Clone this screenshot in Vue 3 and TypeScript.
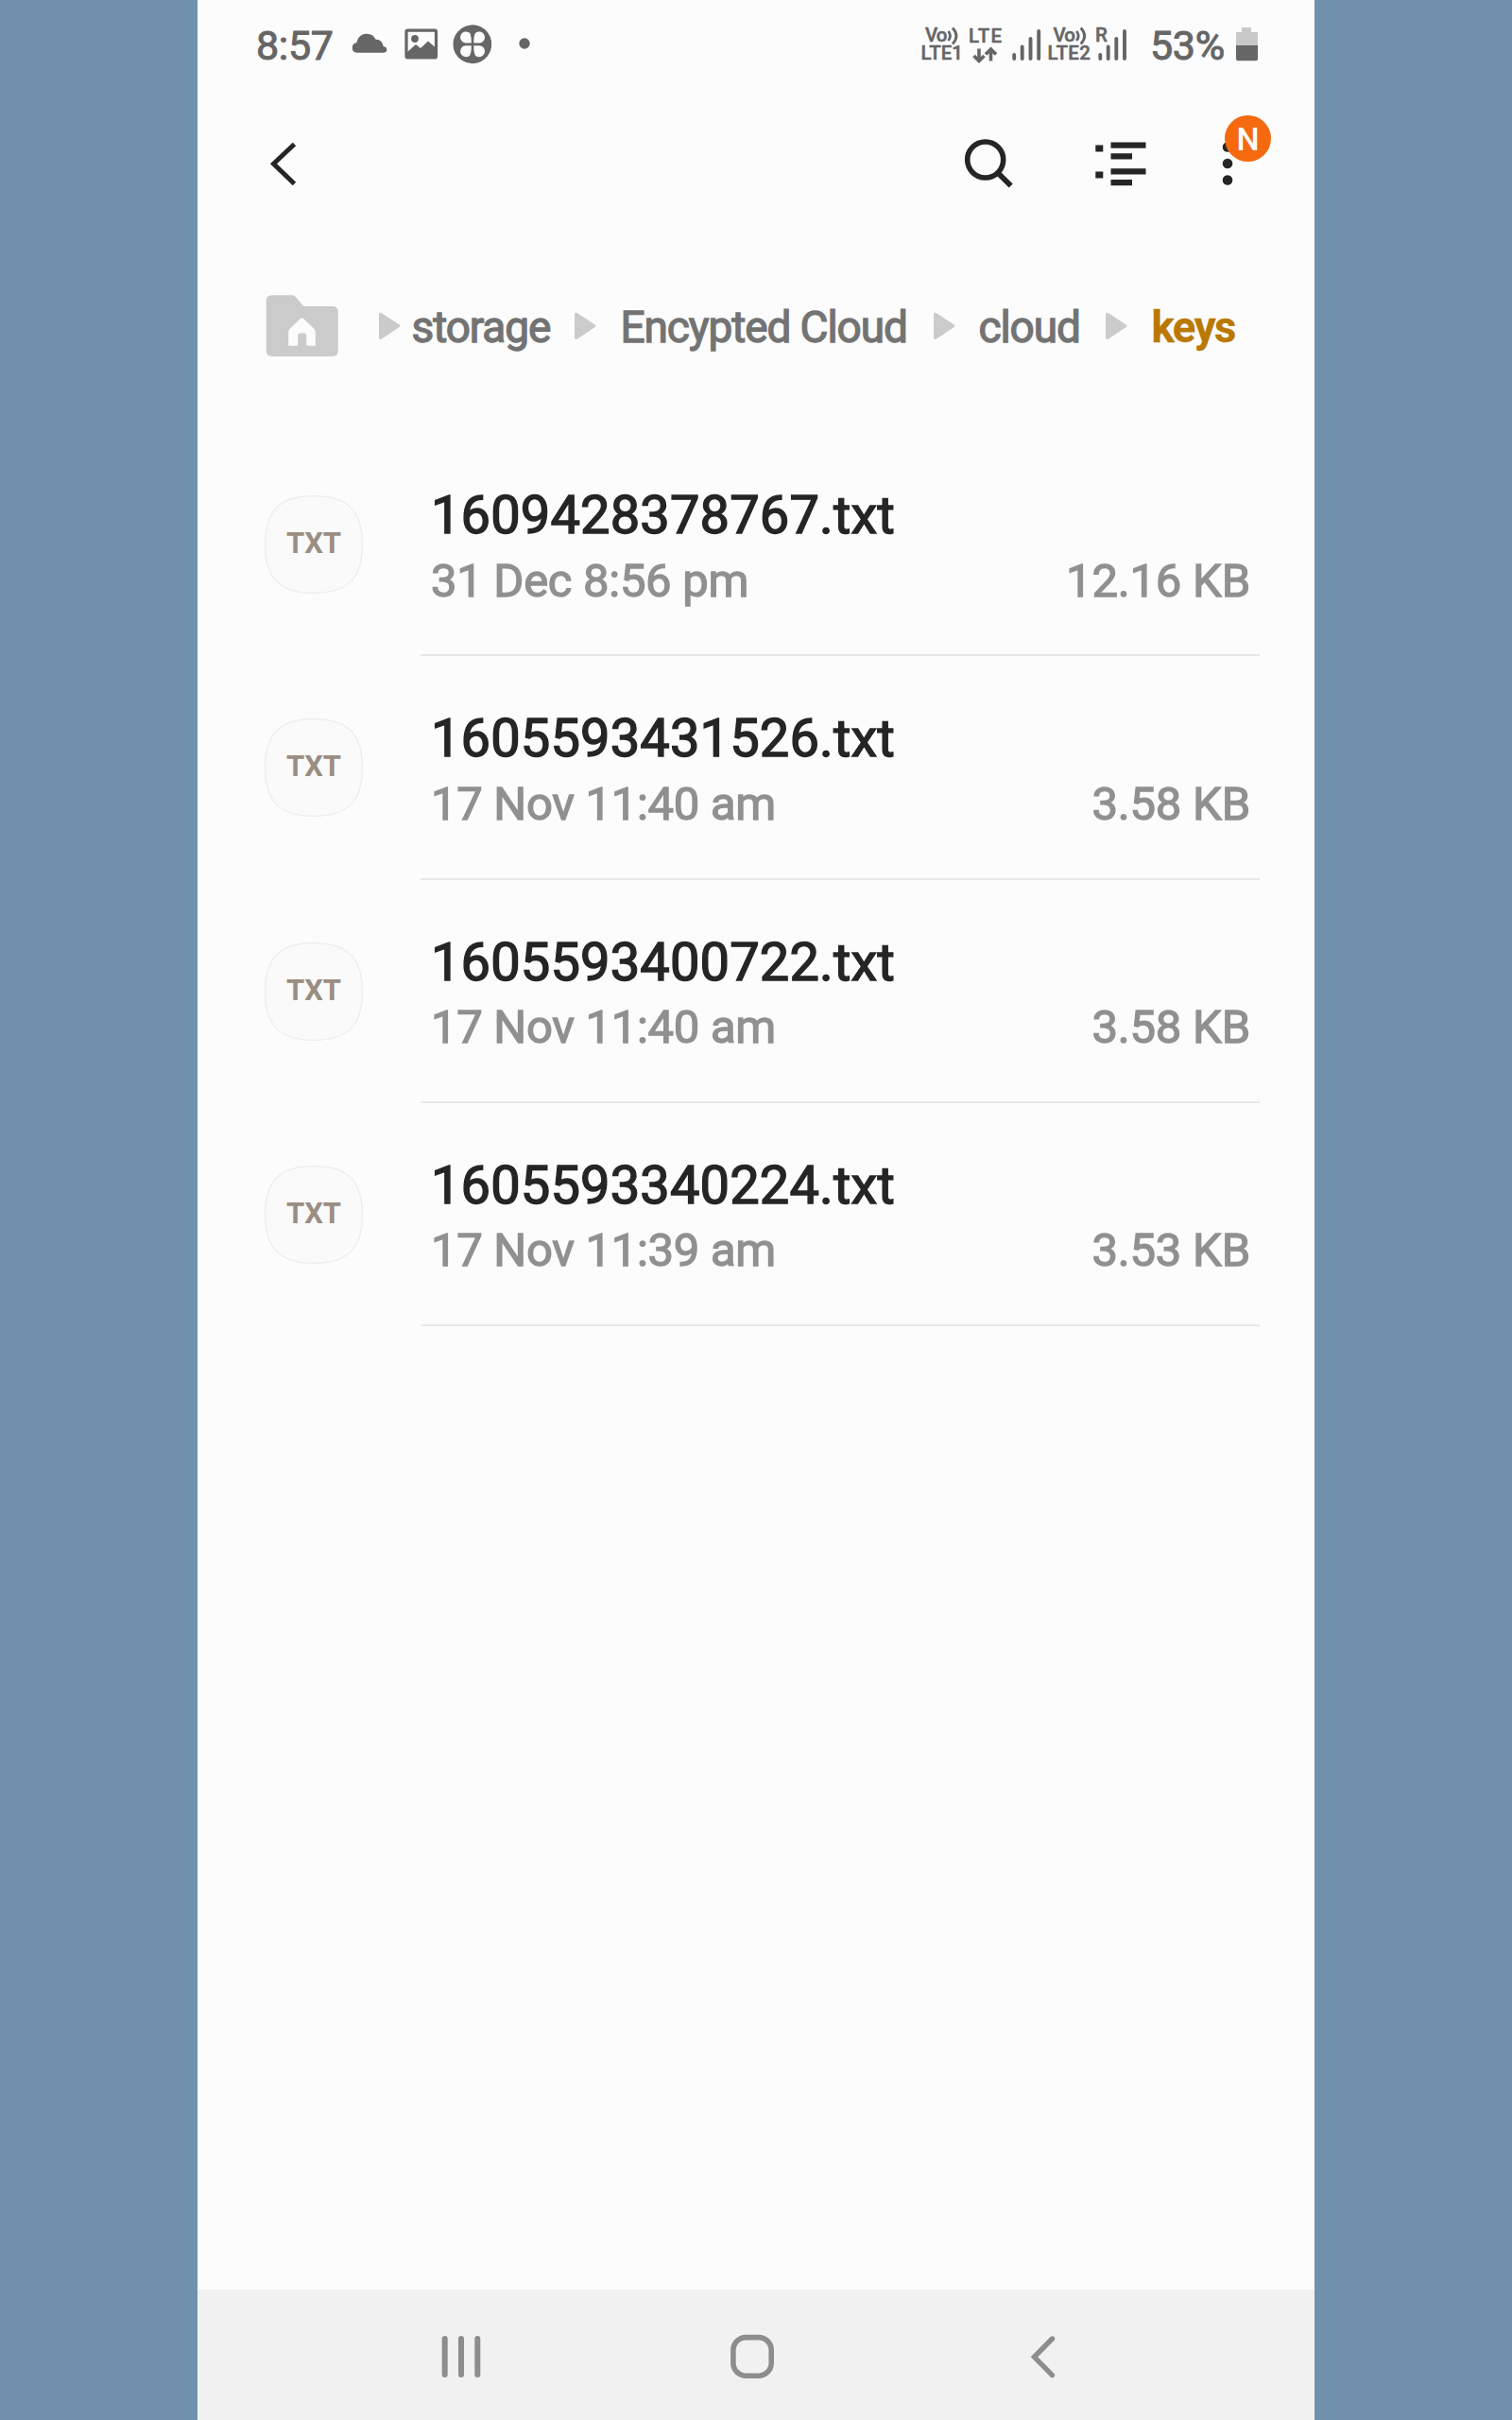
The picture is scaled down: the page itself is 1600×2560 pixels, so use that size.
<script setup lang="ts">
interface FileEntry {
  name: string
  modified: string
  size: string
}

const files: FileEntry[] = [
  { name: '1609428378767.txt', modified: '31 Dec 8:56 pm', size: '12.16 KB' },
  { name: '1605593431526.txt', modified: '17 Nov 11:40 am', size: '3.58 KB' },
  { name: '1605593400722.txt', modified: '17 Nov 11:40 am', size: '3.58 KB' },
  { name: '1605593340224.txt', modified: '17 Nov 11:39 am', size: '3.53 KB' },
]

const crumbs: { label: string; cls: string }[] = [
  { label: 'storage', cls: 'c-storage' },
  { label: 'Encypted Cloud', cls: 'c-vault' },
  { label: 'cloud', cls: 'c-cloud' },
  { label: 'keys', cls: 'c-keys' },
]
</script>

<template>
  <div class="page">
    <main class="phone">
      <div class="status">
        <span class="time">8:57</span>
        <svg class="notif" width="200" height="96" viewBox="370 0 200 96">
          <path fill="#666" d="M377.500 55.800a5.300 5.300 0 0 1-.3-10.500c.6-1 .6-1.500.9-2.500a10.500 10.500 0 0 1 19.500-1c4.500-.3 7.500 3 8 7.300 5 .6 5 6.700.2 6.700z" />
          <rect x="430" y="32.200" width="31.500" height="28.800" rx="1.500" fill="none" stroke="#666" stroke-width="3.200" />
          <circle cx="439" cy="41" r="3.900" fill="#666" />
          <path fill="#666" d="M431 55l9-8 5 4 8-7.500 8 7v10h-30z" />
          <path fill="#666" d="M520 43.500v6.500a20.400 20.400 0 1 1 0-6.500z" />
          <g fill="#fcfcfc">
            <path d="M498.800 45.500h-5.800a6 6 0 1 1 4.300-10.300c1.300 2.600 1.500 6.800 1.500 10.300z" />
            <path d="M501.300 45.500h5.800a6 6 0 1 0-4.300-10.300c-1.300 2.600-1.500 6.800-1.500 10.300z" />
            <path d="M498.800 48.200h-5.800a6 6 0 1 0 4.300 10.300c1.300-2.600 1.500-6.800 1.500-10.300z" />
            <path d="M501.300 48.200h5.800a6 6 0 1 1-4.300 10.300c-1.300-2.600-1.500-6.800-1.500-10.300z" />
          </g>
          <circle cx="555" cy="46" r="5.700" fill="#666" />
        </svg>
        <svg class="network" width="230" height="96" viewBox="970 0 230 96">
          <g class="net-text">
            <text x="979" y="44.200" textLength="23.500">Vo</text>
            <text x="974.500" y="63.400" textLength="44.500">LTE1</text>
            <text x="1025" y="45.200" textLength="35">LTE</text>
            <text x="1114.500" y="44.200" textLength="23.500">Vo</text>
            <text x="1108.500" y="63.400" textLength="45.500">LTE2</text>
            <text x="1159" y="43.700">R</text>
          </g>
          <g fill="none" stroke="#666" stroke-width="2.800">
            <path d="M1003.500 33q4 5 0 10M1008 29.500q8 8.500 0 17" />
            <path d="M1139.200 33q4 5 0 10M1143.700 29.500q8 8.500 0 17" />
          </g>
          <path fill="none" stroke="#666" stroke-width="3.600" d="M1036 51.500v12M1030.500 59l5.500 5.500 5.500-5.500M1048.500 64.500v-12M1043 57.500l5.500-5.500 5.500 5.500" />
          <g stroke="#666" stroke-width="3.900" stroke-linecap="round">
            <path d="M1073.200 58v4M1081.700 49.500V62M1090.500 41v21M1099.200 33v29" />
            <path d="M1164.300 58v4M1172.700 49.500V62M1181.300 41v21M1190 33v29" />
          </g>
        </svg>
        <span class="percent">53%</span>
        <svg class="battery" width="24" height="96" viewBox="1308 0 24 96">
          <path fill="#c9c9c9" d="M1314 29h10v5h7v15h-23V34h6z" />
          <path fill="#666" d="M1308 48h23v14.500q0 1.700-1.700 1.700h-19.600q-1.700 0-1.700-1.700z" />
        </svg>
      </div>

      <header class="toolbar">
        <svg width="30" height="50" viewBox="285 148 30 50">
          <path d="M311.500 152.500L289.500 173.300 311.500 194.500" fill="none" stroke="#252525" stroke-width="5" />
        </svg>
        <svg class="search" width="54" height="54" viewBox="1020 146 54 54">
          <circle cx="1042.700" cy="169" r="19" fill="none" stroke="#252525" stroke-width="5.600" />
          <path d="M1056 183l13.700 13.500" stroke="#252525" stroke-width="5.800" />
        </svg>
        <svg class="view" width="54" height="50" viewBox="1159 148 54 50">
          <path fill="#252525" d="M1159.300 153.400h8v7h-8zM1159.300 181.400h8v7h-8zM1175.500 150.400h37v6.400h-37zM1175.500 162.200h22.500v6.200h-22.500zM1175.500 178.300h37v6.300h-37zM1175.500 190h22.500v6.300h-22.500z" />
        </svg>
        <div class="more">
          <svg width="12" height="48" viewBox="1292.500 149.500 12 48">
            <g fill="#252525">
              <circle cx="1298.500" cy="156" r="5.300" />
              <circle cx="1298.500" cy="173.500" r="5.300" />
              <circle cx="1298.500" cy="191" r="5.300" />
            </g>
          </svg>
          <span class="badge">N</span>
        </div>
      </header>

      <nav class="crumbs">
        <svg class="folder" width="78" height="66" viewBox="281 312 78 66">
          <path fill="#cbcbcb" d="M288 312.300h21q2.500 0 4.200 2.200l6.800 8q1.200 1.500 3 1.500h28.500q6.300 0 6.300 6.300v40.500q0 6.200-6.300 6.200H288q-6.300 0-6.300-6.200V318.500q0-6.200 6.300-6.200z" />
          <path fill="#fcfcfc" d="M305.200 365.800v-14q0-2.500 1.500-4l11.300-10.800q1.500-1.300 3 0l11.300 10.800q1.500 1.500 1.500 4v14h-9.500v-11q0-2.300-2.300-2.300h-4.500q-2.300 0-2.300 2.300v11z" />
        </svg>
        <template v-for="c in crumbs" :key="c.label">
          <svg class="arrow" width="23" height="30" viewBox="0 0 23 30">
            <path fill="#cbcbcb" d="M0 3Q0-.5 3 1.200L21.700 13.600q1.600 1.200 0 2.400L3 28.500Q0 30.100 0 27z" />
          </svg>
          <span class="crumb" :class="c.cls">{{ c.label }}</span>
        </template>
      </nav>

      <ul class="files">
        <li v-for="f in files" :key="f.name" class="row">
          <div class="thumb">
            <svg width="104" height="104" viewBox="0 0 104 104">
              <path fill="#fafafa" stroke="#ececec" stroke-width="1.200" d="M52 .6C88 .6 103.400 16 103.400 52S88 103.400 52 103.400.6 88 .6 52 16 .6 52 .6z" />
            </svg>
            <span class="ext">TXT</span>
          </div>
          <div class="info">
            <div class="name">{{ f.name }}</div>
            <div class="meta">
              <span>{{ f.modified }}</span>
              <span class="size">{{ f.size }}</span>
            </div>
          </div>
        </li>
      </ul>

      <footer class="navbar">
        <svg class="recents" width="42" height="46" viewBox="467 2470 42 46">
          <path d="M470.700 2474v38M488 2474v38M505.300 2474v38" stroke="#8d8d8d" stroke-width="6" stroke-linecap="round" />
        </svg>
        <svg class="home" width="48" height="48" viewBox="772 2469.500 48 48">
          <rect x="775.900" y="2473.100" width="40.300" height="40.600" rx="13.500" fill="none" stroke="#8d8d8d" stroke-width="5.600" />
        </svg>
        <svg class="back" width="28" height="46" viewBox="1090 2470 28 46">
          <path d="M1113.500 2474l-19 19.300 19 19.300" fill="none" stroke="#8d8d8d" stroke-width="5.400" stroke-linecap="round" />
        </svg>
      </footer>
    </main>
  </div>
</template>

<style>
body {
  background: #7190ac;
}
</style>

<style scoped>
.page {
  width: 1600px;
  height: 2560px;
  overflow: hidden;
  background: #7190ac;
  font-family: Roboto, "Liberation Sans", sans-serif;
}
.phone {
  display: flex;
  flex-direction: column;
  width: 1182px;
  height: 2560px;
  margin-left: 209px;
  background: #fcfcfc;
}
svg {
  display: block;
  flex: none;
}
.status {
  display: flex;
  height: 96px;
  padding-left: 62px;
  line-height: 96px;
  font-size: 43px;
  letter-spacing: -0.300px;
  color: #666;
  -webkit-text-stroke: 1px #666;
}
.time {
  width: 99px;
}
.network {
  margin-left: 400px;
}
.net-text {
  font-size: 20.500px;
  font-weight: 500;
  letter-spacing: 0;
  fill: #666;
  stroke: #666;
  stroke-width: 0.500px;
  -webkit-text-stroke: 0.500px #666;
}
.percent {
  width: 91px;
  margin-left: 17px;
}
.toolbar {
  display: flex;
  align-items: center;
  height: 154px;
  margin-bottom: 1px;
  padding-left: 76px;
}
.search {
  margin-left: 705px;
}
.view {
  margin-left: 85px;
}
.more {
  position: relative;
  margin-left: 79.500px;
}
.badge {
  position: absolute;
  left: 3.500px;
  top: -27.500px;
  width: 49px;
  height: 49px;
  border-radius: 50%;
  background: #f56a0f;
  color: #fff;
  font-size: 34px;
  font-weight: 500;
  line-height: 50px;
  text-align: center;
}
.crumbs {
  display: flex;
  align-items: center;
  height: 100px;
  margin-top: 45px;
  padding-left: 72px;
}
.arrow {
  margin-top: -3px;
}
.folder {
  margin-right: 42px;
  margin-top: -3px;
}
.crumb {
  flex: none;
  font-size: 46px;
  line-height: 101px;
  letter-spacing: -1.100px;
  color: #737373;
  white-space: nowrap;
  -webkit-text-stroke: 1.300px #737373;
}
.c-storage {
  width: 172.500px;
  padding-left: 11.500px;
}
.c-vault {
  width: 331px;
  padding-left: 25.500px;
}
.c-cloud {
  width: 134.500px;
  padding-left: 25px;
}
.c-keys {
  padding-left: 25.500px;
  font-size: 45.500px;
  font-weight: 700;
  letter-spacing: -1.500px;
  color: #ba7800;
  -webkit-text-stroke: 0.300px #ba7800;
}
.files {
  margin: 62px 0 0;
  padding: 0;
  list-style: none;
}
.row {
  display: flex;
  height: 236.330px;
  padding-left: 71px;
}
.thumb {
  position: relative;
  width: 104px;
  height: 104px;
  margin-top: 66px;
}
.ext {
  position: absolute;
  inset: 0;
  font-size: 31px;
  font-weight: 700;
  line-height: 101px;
  text-align: center;
  color: #9b8d82;
}
.info {
  box-sizing: border-box;
  width: 888px;
  height: 236.330px;
  margin-left: 60.500px;
  padding: 54px 8.500px 0 11.500px;
  border-bottom: 2px solid #e7e7e7;
}
.name {
  font-size: 56px;
  line-height: 66px;
  letter-spacing: 0.150px;
  color: #252525;
  -webkit-text-stroke: 1.400px #252525;
}
.meta {
  display: flex;
  justify-content: space-between;
  margin-top: 8.500px;
  font-size: 49px;
  line-height: 56px;
  letter-spacing: -0.300px;
  color: #909090;
  -webkit-text-stroke: 1.300px #909090;
}
.size {
  margin-right: 1px;
  letter-spacing: -0.200px;
}
.navbar {
  display: flex;
  align-items: center;
  height: 138px;
  margin-top: auto;
  padding-left: 258px;
  background: #f1f1f1;
}
.home {
  margin-left: 263px;
}
.back {
  margin-left: 270px;
}
.recents,
.home,
.back {
  margin-top: 4px;
}
</style>
